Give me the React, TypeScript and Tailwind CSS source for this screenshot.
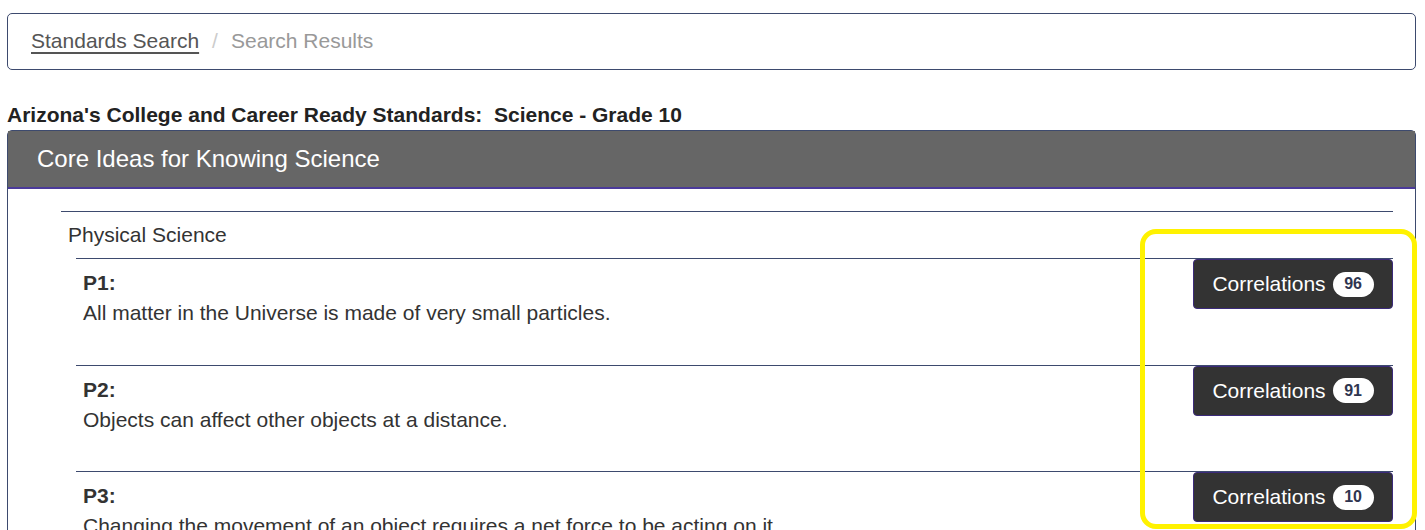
import React from "react";

const standards = [
  { code: "P1:", text: "All matter in the Universe is made of very small particles.", count: 96 },
  { code: "P2:", text: "Objects can affect other objects at a distance.", count: 91 },
  { code: "P3:", text: "Changing the movement of an object requires a net force to be acting on it.", count: 10 },
];

const CorrelationsButton: React.FC<{ count: number }> = ({ count }) => (
  <button className="flex h-[50px] w-[200px] shrink-0 items-center justify-center gap-[7px] rounded-[4px] border border-[#3b2a7a] bg-[#333333] text-[21px] text-white">
    <span>Correlations</span>
    <span className="flex h-[25px] min-w-[41px] items-center justify-center rounded-full bg-white px-2 text-[16px] font-bold text-[#2f3550]">
      {count}
    </span>
  </button>
);

const StandardRow: React.FC<{ code: string; text: string; count: number }> = ({ code, text, count }) => (
  <div className="ml-[15px] flex h-[106.5px] justify-between border-t border-[#3d4a6e]">
    <div className="pl-[7px] pt-[9px] text-[21px] leading-[30px] text-[#333]">
      <p className="font-bold">{code}</p>
      <p>{text}</p>
    </div>
    <CorrelationsButton count={count} />
  </div>
);

export default function App() {
  return (
    <div className="relative h-[530px] overflow-hidden bg-white pl-[7px] pr-[9px] pt-[13px] font-['Liberation_Sans',Arial,sans-serif]">
      <div className="flex h-[57px] items-center gap-[13px] rounded-[5px] border border-[#3d4a6e] px-[23px] pb-[2px] text-[21px]">
        <a className="text-[#555] underline decoration-[2px] underline-offset-[4px]">Standards Search</a>
        <span className="text-[#ccc]">/</span>
        <span className="text-[#999]">Search Results</span>
      </div>

      <h2 className="mt-[32px] text-[21px] font-bold leading-[26px] whitespace-pre text-[#222]">
        {"Arizona's College and Career Ready Standards:  Science - Grade 10"}
      </h2>

      <div className="mt-[2px] rounded-t-[5px] border border-[#3d4a6e]">
        <div className="flex h-[58px] items-center border-b-2 border-[#4b3a9a] bg-[#666666] pl-[29px] text-[24px] text-white">
          Core Ideas for Knowing Science
        </div>
        <div className="ml-[53px] mr-[22px] mt-[22px] border-t border-[#3d4a6e]">
          <p className="pl-[7px] pt-[10px] pb-[11px] text-[21px] leading-[25px] text-[#333]">Physical Science</p>
          {standards.map((s) => (
            <StandardRow key={s.code} {...s} />
          ))}
        </div>
      </div>

      <div className="pointer-events-none absolute left-[1140px] top-[229px] h-[300px] w-[277px] rounded-[16px] border-[5px] border-[#fff200]" />
    </div>
  );
}
